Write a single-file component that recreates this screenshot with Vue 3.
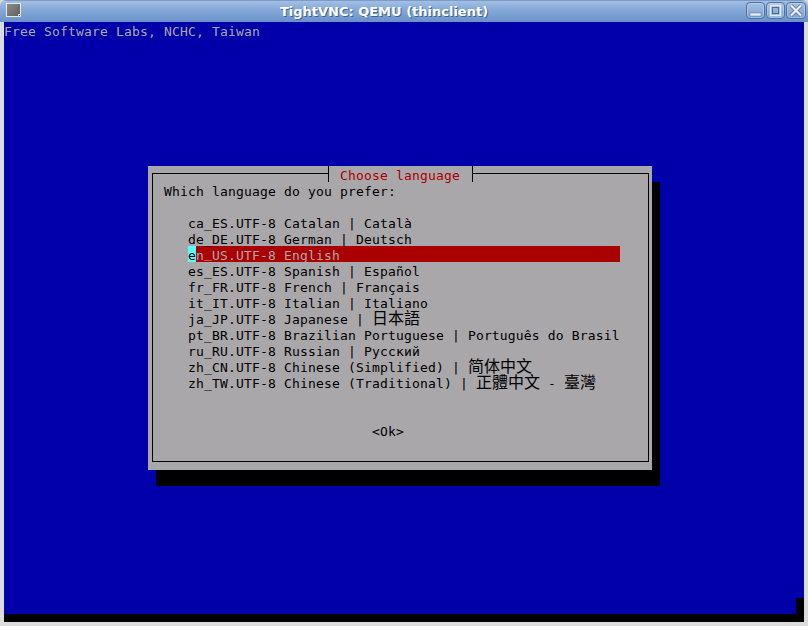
<script setup>
const rows = [
  { label: 'ca_ES.UTF-8 Catalan | Català' },
  { label: 'de_DE.UTF-8 German | Deutsch' },
  { label: '.UTF-8 English', active: true },
  { label: 'es_ES.UTF-8 Spanish | Español' },
  { label: 'fr_FR.UTF-8 French | Français' },
  { label: 'it_IT.UTF-8 Italian | Italiano' },
  { label: 'ja_JP.UTF-8 Japanese | ', parts: [['cjk', '日本語']] },
  { label: 'pt_BR.UTF-8 Brazilian Portuguese | Português do Brasil' },
  { label: 'ru_RU.UTF-8 Russian | Русский' },
  { label: 'zh_CN.UTF-8 Chinese (Simplified) | ', parts: [['cjk', '简体中文']] },
  { label: 'zh_TW.UTF-8 Chinese (Traditional) | ', parts: [['cjk', '正體中文'], ['', ' - '], ['cjk', '臺灣']] },
]
</script>

<template>
  <div class="window">
    <header class="titlebar">
      <svg class="app-icon" width="16" height="15" viewBox="0 0 16 15">
        <defs>
          <linearGradient id="ai" x1="0" y1="0" x2="1" y2="1">
            <stop offset="0" stop-color="#8f8f8a" />
            <stop offset="1" stop-color="#5c5c58" />
          </linearGradient>
        </defs>
        <rect x="0.5" y="0.5" width="14" height="13" fill="url(#ai)" stroke="#e8e8e4" />
        <rect x="12" y="11" width="3" height="3" fill="#dcdcd8" />
        <rect x="13" y="12" width="1" height="1" fill="#555" />
      </svg>
      <span class="title">TightVNC: QEMU (thinclient)</span>
      <div class="controls">
        <button class="ctl" aria-label="Minimize">
          <svg width="19" height="17" viewBox="0 0 19 17"><rect x="4" y="11" width="11" height="3" fill="#e8eef8" stroke="#4a6c9c" stroke-width="0.5" /></svg>
        </button>
        <button class="ctl" aria-label="Maximize">
          <svg width="19" height="17" viewBox="0 0 19 17"><rect x="4.5" y="3.5" width="10" height="10" fill="none" stroke="#dfe8f5" stroke-width="1.6" /><rect x="6.5" y="5.5" width="6" height="6" fill="none" stroke="#4a6c9c" /></svg>
        </button>
        <button class="ctl" aria-label="Close">
          <svg width="20" height="17" viewBox="0 0 20 17"><path d="M5 3.5 L15 13.5 M15 3.5 L5 13.5" stroke="#4a6c9c" stroke-width="3.6" /><path d="M5 3.5 L15 13.5 M15 3.5 L5 13.5" stroke="#eef3fa" stroke-width="2.2" /></svg>
        </button>
      </div>
    </header>

    <main class="screen">
      <div class="banner line">Free Software Labs, NCHC, Taiwan</div>

      <section class="dialog">
        <div class="frame">
          <h1 class="dlg-title"><span>Choose language</span></h1>
          <p class="line prompt">Which language do you prefer:</p>
          <ul class="list">
            <li v-for="r in rows" :key="r.label" class="line" :class="{ active: r.active }">
              <template v-if="r.active"><span class="cursor">e</span>n<span class="raised">_</span>US</template>{{ r.label }}<template v-for="(p, i) in r.parts" :key="i"><span :class="p[0]">{{ p[1] }}</span></template>
            </li>
          </ul>
          <div class="line ok">&lt;Ok&gt;</div>
        </div>
      </section>

      <div class="bottom">
        <div class="cell"></div>
        <div class="bar"></div>
      </div>
    </main>
  </div>
</template>

<style>
html, body { margin: 0; padding: 0; background: #d8d8d8; overflow: hidden; }
</style>

<style scoped>
.window {
  width: 808px;
  height: 626px;
  display: flex;
  flex-direction: column;
  box-sizing: border-box;
  background: #dcdcdc;
  border-radius: 6px 6px 0 0;
  overflow: hidden;
}
.titlebar {
  height: 22px;
  flex: none;
  display: flex;
  align-items: center;
  background: linear-gradient(#a3bfe4, #86a9d8 40%, #6a92c9);
  border-top: 1px solid #7d9bc6;
  box-sizing: border-box;
  padding-left: 6px;
}
.app-icon { flex: none; margin-top: -2px; }
.title {
  flex: 1;
  text-align: center;
  font: bold 13px "DejaVu Sans", sans-serif;
  color: #fff;
  text-shadow: 1px 1px 0 #3f618f;
}
.controls { display: flex; gap: 1px; margin-right: 2px; margin-top: -2px; }
.ctl {
  width: 19px;
  height: 17px;
  padding: 0;
  box-sizing: border-box;
  border: 1px solid #4f719f;
  border-radius: 4px;
  background: linear-gradient(#a5bfe2, #7fa3d3);
  box-shadow: inset 0 0 0 1px rgba(255, 255, 255, 0.25);
  display: block;
  position: relative;
  overflow: hidden;
}
.ctl:last-child { width: 20px; }
.ctl svg { position: absolute; left: -1px; top: -1px; }

.screen {
  width: 800px;
  height: 600px;
  margin-left: 4px;
  background: #0000aa;
  display: flex;
  flex-direction: column;
  color: #aaaaaa;
}
.line {
  height: 16px;
  line-height: 19px;
  white-space: pre;
  font-family: "DejaVu Sans Mono", "Noto Sans CJK TC", monospace;
  font-size: 13px;
  letter-spacing: 0.17px;
}
.dialog {
  width: 504px;
  height: 304px;
  margin: 128px 0 0 144px;
  padding: 7px 3px 8px 4px;
  box-sizing: border-box;
  background: #aaa7aa;
  box-shadow: 8px 16px 0 #000;
  color: #000;
  flex: none;
}
.frame {
  height: 100%;
  box-sizing: border-box;
  border: 1px solid #000;
  padding: 8px 0 0 11px;
  position: relative;
}
.dlg-title {
  position: absolute;
  left: 175px;
  top: -8px;
  margin: 0;
  width: 145px;
  height: 16px;
  box-sizing: border-box;
  border-left: 1px solid #000;
  border-right: 1px solid #000;
  background: #aaa7aa;
  color: #aa0000;
  padding-left: 11px;
  font: normal 13px/19px "DejaVu Sans Mono", monospace;
  letter-spacing: 0.17px;
  white-space: pre;
}
.prompt { margin: 0; }
.list {
  list-style: none;
  margin: 16px 0 0 24px;
  padding: 0;
  width: 432px;
}
.list .active { background: #aa0000; color: #aaaaaa; }
.cursor { background: #55ffff; color: #000; display: inline-block; width: 8px; height: 16px; }
.raised { vertical-align: 2px; line-height: 0; }
.cjk {
  font-family: "Noto Sans CJK TC", sans-serif;
  font-size: 16px;
  line-height: 0;
  letter-spacing: 0;
}
.ok { margin: 32px 0 0 208px; }
.bottom {
  margin-top: auto;
  display: flex;
  flex-direction: column;
  align-items: flex-end;
}
.cell { width: 8px; height: 16px; background: #000; }
.bar { width: 100%; height: 8px; background: #000; }
</style>
